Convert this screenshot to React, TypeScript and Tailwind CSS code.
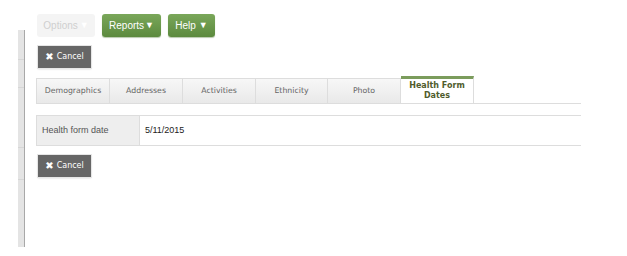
import React from 'react'

const tabs = ['Demographics', 'Addresses', 'Activities', 'Ethnicity', 'Photo']

const CancelButton = () => (
  <button className="flex items-center justify-center gap-[3px] w-[53px] h-[22px] bg-[#666666] text-white text-[8px] shadow-[0_0_0_1px_#e6e6e6,0_1px_2px_#cccccc] font-['DejaVu_Sans',sans-serif]">
    <span className="text-[10px] font-bold leading-none">✖</span>
    <span>Cancel</span>
  </button>
)

export default function App() {
  return (
    <div className="w-[627px] h-[256px] bg-white flex overflow-hidden font-['Liberation_Sans',Arial,sans-serif]">
      {/* left gutter bar */}
      <div className="ml-[18px] mt-[30px] w-[7px] h-[217px] bg-[#e4e4e4] border-r border-[#a8a8a8] flex flex-col">
        <div className="h-[30px] border-b border-[#d6d6d6]" />
        <div className="h-[28px] border-b border-[#d6d6d6]" />
        <div className="h-[60px] border-b border-[#d6d6d6]" />
        <div className="h-[32px] border-b border-[#d6d6d6]" />
      </div>

      <div className="ml-[11px] flex flex-col">
        <div className="flex gap-[7px] mt-[14px] ml-[1px]">
          <button className="w-[58px] h-[23px] rounded-[3px] bg-[#f4f4f4] text-[#cfcfcf] text-[10px] flex items-center justify-center">
            Options <span className="text-[9px] ml-[2px] text-white">▼</span>
          </button>
          <button className="w-[59px] h-[23px] rounded-[3px] bg-gradient-to-b from-[#7aa75a] to-[#5c8a3e] text-white text-[10px] flex items-center justify-center shadow-[0_1px_1px_#b9c9ad]">
            Reports<span className="text-[9px] ml-[1px]">▼</span>
          </button>
          <button className="w-[47px] h-[23px] rounded-[3px] bg-gradient-to-b from-[#7aa75a] to-[#5c8a3e] text-white text-[10px] flex items-center justify-center shadow-[0_1px_1px_#b9c9ad]">
            Help <span className="text-[9px] ml-[3px]">▼</span>
          </button>
        </div>

        <div className="mt-[9px] ml-[2px]">
          <CancelButton />
        </div>

        {/* tabs */}
        <div className="mt-[8px] flex w-[545px] border-b border-[#dddddd] font-['DejaVu_Sans',sans-serif]">
          <div className="flex mt-[2px] border-l border-[#dddddd]">
            {tabs.map((t, i) => (
              <div
                key={t}
                className={`${i === 3 ? 'w-[72px]' : 'w-[73px]'} h-[25px] flex items-center justify-center text-[7.8px] text-[#666666] bg-gradient-to-b from-[#f7f7f7] to-[#e9e9e9] border-t border-r border-[#dddddd]`}
              >
                {t}
              </div>
            ))}
          </div>
          <div className="w-[73px] h-[27px] -mb-px bg-white border-t-[3px] border-t-[#7b9c5c] border-r border-[#dddddd] flex flex-col items-center justify-center text-[8px] font-bold leading-[10px] text-[#505c2c]">
            <span>Health Form</span>
            <span>Dates</span>
          </div>
        </div>

        {/* form row */}
        <div className="mt-[11px] flex w-[545px] h-[31px] border-y border-[#dddddd] text-[9px]">
          <div className="w-[104px] bg-[#eeeeee] border-l border-r border-[#dddddd] flex items-center pl-[5px] text-[#555555]">
            Health form date
          </div>
          <div className="flex items-center pl-[5px] text-[#222222]">5/11/2015</div>
        </div>

        <div className="mt-[9px] ml-[2px]">
          <CancelButton />
        </div>
      </div>
    </div>
  )
}
